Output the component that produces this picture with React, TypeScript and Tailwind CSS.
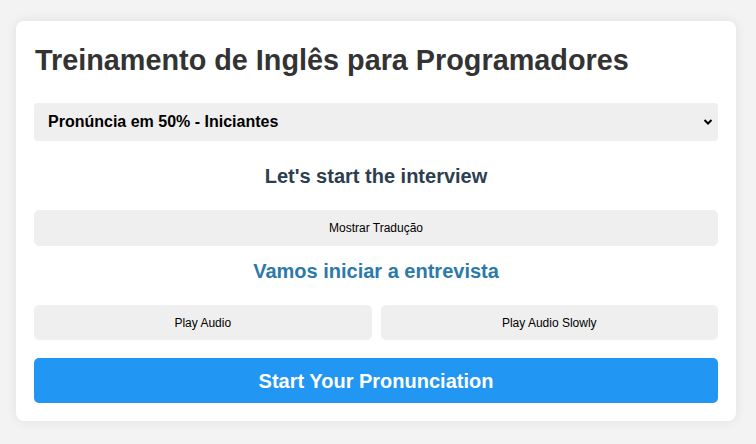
import { useState } from "react";

const levels = [
  "Pronúncia em 50% - Iniciantes",
  "Pronúncia em 75% - Intermediários",
  "Pronúncia em 100% - Avançados",
];

const GrayButton = ({
  label,
  tall = false,
  onClick,
}: {
  label: string;
  tall?: boolean;
  onClick?: () => void;
}) => {
  return (
    <button
      onClick={onClick}
      className={`${tall ? "h-[36px]" : "h-[35px]"} w-full rounded-[5px] bg-[#efefef] text-[12px] text-black`}
    >
      {label}
    </button>
  );
};

const App = () => {
  const [level, setLevel] = useState(levels[0]);
  const [showTranslation, setShowTranslation] = useState(true);

  return (
    <div
      className="min-h-[444px] bg-[#f3f3f3] px-4 pt-[21px]"
      style={{ fontFamily: '"Liberation Sans", Arial, sans-serif' }}
    >
      <div className="flex w-[720px] flex-col rounded-[8px] bg-white px-[18px] pt-[23px] pb-[18px] shadow-[0_0_12px_rgba(0,0,0,0.08)]">
        {/* Title */}
        <h1 className="pl-px text-[28.8px] leading-[33px] font-bold text-[#333333]">
          Treinamento de Inglês para Programadores
        </h1>

        {/* Level select */}
        <div className="relative mt-[26px]">
          <select
            value={level}
            onChange={(e) => setLevel(e.target.value)}
            className="h-[38px] w-full appearance-none rounded-[4px] bg-[#efefef] pl-[14px] text-[16px] font-bold text-black outline-none"
          >
            {levels.map((item) => (
              <option key={item} value={item}>
                {item}
              </option>
            ))}
          </select>
          <svg
            className="pointer-events-none absolute top-[15px] right-[5px]"
            width="10"
            height="8"
            viewBox="0 0 10 8"
          >
            <path d="M1.5 2 L5 5.5 L8.5 2" fill="none" stroke="#000" strokeWidth="2" />
          </svg>
        </div>

        {/* English sentence */}
        <h2 className="mt-[24px] text-center text-[20px] leading-[23px] font-bold text-[#2c3e50]">
          Let's start the interview
        </h2>

        <div className="mt-[22px]">
          <GrayButton
            label="Mostrar Tradução"
            tall
            onClick={() => setShowTranslation(!showTranslation)}
          />
        </div>

        {/* Translation */}
        <p
          className={`mt-[14px] text-center text-[20px] leading-[23px] font-bold text-[#2c7aa9] ${
            showTranslation ? "" : "invisible"
          }`}
        >
          Vamos iniciar a entrevista
        </p>

        <div className="mt-[22px] grid grid-cols-2 gap-[9px]">
          <GrayButton label="Play Audio" />
          <GrayButton label="Play Audio Slowly" />
        </div>

        <button className="mt-[18px] h-[45px] w-full rounded-[5px] bg-[#2196f3] text-[20px] font-bold text-white">
          Start Your Pronunciation
        </button>
      </div>
    </div>
  );
};

export default App;
